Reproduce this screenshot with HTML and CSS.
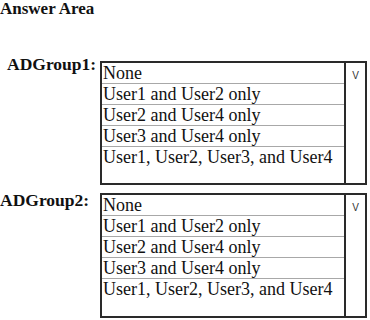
FILE: index.html
```html
<!DOCTYPE html>
<html>
<head>
<meta charset="utf-8">
<link rel="stylesheet" href="styles.css">
</head>
<body>
<h1 class="title">Answer Area</h1>
<div class="question q1">
  <div class="label">ADGroup1:</div>
  <div class="dropdown">
    <ul class="options">
      <li>None</li>
      <li>User1 and User2 only</li>
      <li>User2 and User4 only</li>
      <li>User3 and User4 only</li>
      <li>User1, User2, User3, and User4</li>
    </ul>
    <div class="arrow">V</div>
  </div>
</div>
<div class="question q2">
  <div class="label">ADGroup2:</div>
  <div class="dropdown">
    <ul class="options">
      <li>None</li>
      <li>User1 and User2 only</li>
      <li>User2 and User4 only</li>
      <li>User3 and User4 only</li>
      <li>User1, User2, User3, and User4</li>
    </ul>
    <div class="arrow">V</div>
  </div>
</div>
</body>
</html>
```

FILE: styles.css
```css
html, body {
  margin: 0;
  padding: 0;
  background: #ffffff;
}
body {
  font-family: "Liberation Serif", "Times New Roman", serif;
  color: #111;
  width: 370px;
  height: 320px;
  overflow: hidden;
}
.title {
  margin: 0;
  font-size: 17px;
  font-weight: bold;
  line-height: 18px;
}
.question {
  display: flex;
  align-items: flex-start;
}
.q1 {
  margin-top: 36px;
}
.q2 {
  margin-top: 5px;
}
.label {
  width: 100px;
  box-sizing: border-box;
  font-size: 17.5px;
  font-weight: bold;
  line-height: 20px;
}
.q1 .label {
  padding-left: 7px;
}
.q1 .dropdown {
  margin-top: 7px;
  height: 124px;
}
.q2 .dropdown {
  margin-top: 3px;
  height: 125px;
}
.dropdown {
  width: 267px;
  box-sizing: border-box;
  border: 2px solid #2a2a2a;
  display: flex;
}
.options {
  list-style: none;
  margin: 0;
  padding: 0;
  flex: 1;
  display: flex;
  flex-direction: column;
}
.options li {
  height: 20px;
  line-height: 20px;
  font-size: 18px;
  padding-left: 1px;
  border-bottom: 1px solid #a8a8a8;
  white-space: nowrap;
}
.options li:last-child {
  border-bottom: none;
  flex: 1;
}
.arrow {
  width: 19px;
  border-left: 2px solid #2a2a2a;
  font-family: "Liberation Sans", Arial, sans-serif;
  font-size: 10px;
  line-height: 12px;
  padding-top: 7px;
  text-align: center;
  color: #333;
}
```
